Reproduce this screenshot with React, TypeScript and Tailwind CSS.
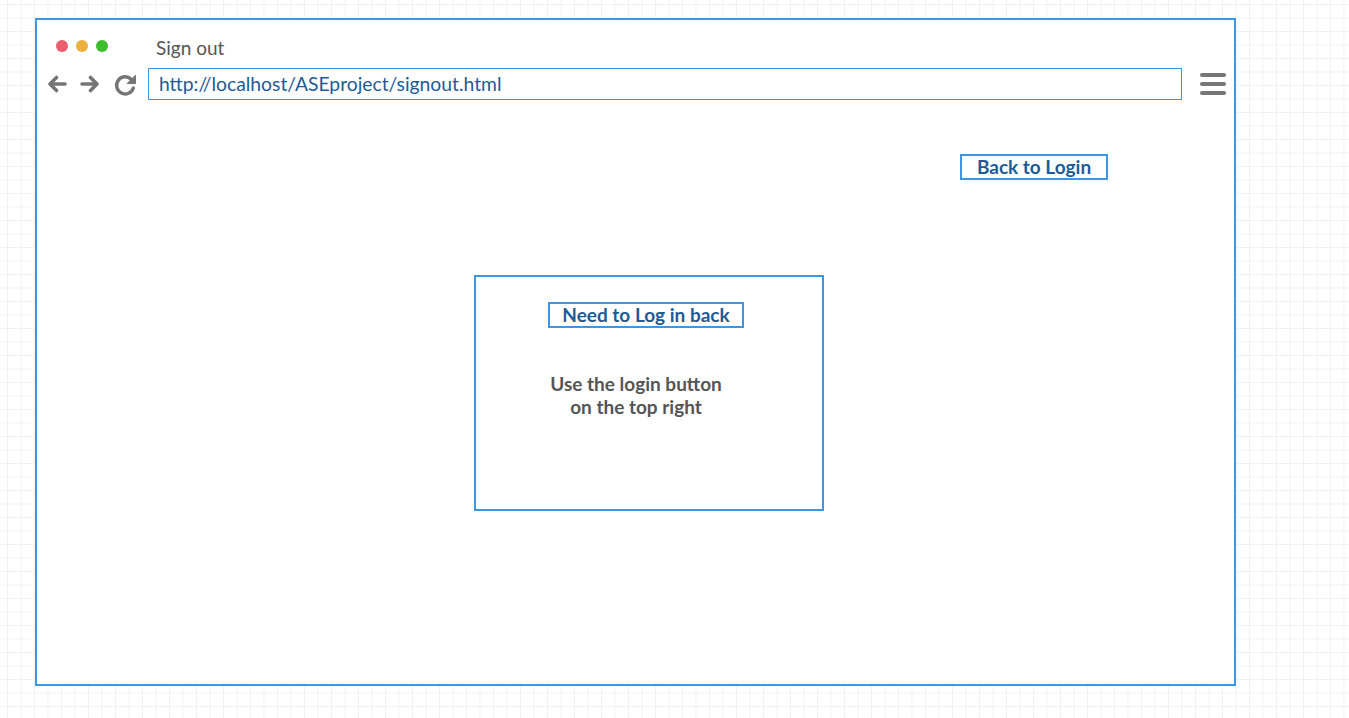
import React from 'react';

const ArrowLeft = () => (
  <svg width="20" height="18" viewBox="0 0 20 18" fill="none" stroke="#757575" strokeWidth="3.6" strokeLinecap="round" strokeLinejoin="round">
    <path d="M18 9H3M9.5 2.5L3 9l6.5 6.5" />
  </svg>
);

const ArrowRight = () => (
  <svg width="20" height="18" viewBox="0 0 20 18" fill="none" stroke="#757575" strokeWidth="3.6" strokeLinecap="round" strokeLinejoin="round">
    <path d="M2 9h15M10.5 2.5L17 9l-6.5 6.5" />
  </svg>
);

const Reload = () => (
  <svg width="24" height="24" viewBox="0 0 24 24" fill="none">
    <path d="M18.2 6.2A8.6 8.6 0 1 0 20.4 15" stroke="#757575" strokeWidth="3.4" strokeLinecap="round" />
    <path d="M22.5 2.2V10.6H14.1Z" fill="#757575" stroke="#757575" strokeWidth="1" strokeLinejoin="round" />
  </svg>
);

const App = () => {
  return (
    <div
      className="min-h-[718px] w-full pt-[18px] pl-[35px] bg-white bg-[linear-gradient(to_right,#f1f1f1_1px,transparent_1px),linear-gradient(to_bottom,#f1f1f1_1px,transparent_1px)] bg-[size:13.5px_13.5px] bg-[position:7px_4px]"
      style={{ fontFamily: 'Lato, "Open Sans", sans-serif' }}
    >
      <div className="w-[1201px] h-[668px] border-2 border-[#3c96e2] bg-white flex flex-col">
        {/* title row */}
        <div className="flex items-center h-[24px] mt-[14px]">
          <div className="flex items-center gap-[8px] ml-[19px]">
            <span className="w-[12px] h-[12px] rounded-full bg-[#eb5d6d]" />
            <span className="w-[12px] h-[12px] rounded-full bg-[#ebb03b]" />
            <span className="w-[12px] h-[12px] rounded-full bg-[#3dbd2d]" />
          </div>
          <span className="ml-[48px] text-[19px] text-[#555555] leading-none mt-[3px]">Sign out</span>
        </div>

        {/* address row */}
        <div className="flex items-center mt-[10px] h-[32px]">
          <div className="ml-[10px] flex items-center gap-[13px]">
            <ArrowLeft />
            <ArrowRight />
          </div>
          <div className="ml-[13px] mt-[2px]">
            <Reload />
          </div>
          <div className="ml-[11px] w-[1034px] h-[32px] border border-[#3c96e2] flex items-center pl-[10px] text-[19.3px] text-[#1d5b97]">
            http://localhost/ASEproject/signout.html
          </div>
          <div className="ml-[18px] flex flex-col gap-[4.5px]">
            <span className="block w-[26px] h-[4.5px] rounded-full bg-[#777777]" />
            <span className="block w-[26px] h-[4.5px] rounded-full bg-[#777777]" />
            <span className="block w-[26px] h-[4.5px] rounded-full bg-[#777777]" />
          </div>
        </div>

        {/* back to login */}
        <div className="flex mt-[54px] pl-[923px]">
          <button className="w-[148px] h-[26px] pb-[2px] border-2 border-[#3c96e2] flex items-center justify-center text-[19px] font-bold text-[#1d5b97] leading-none">
            Back to Login
          </button>
        </div>

        {/* message card */}
        <div className="ml-[437px] mt-[95px] w-[350px] h-[236px] border-2 border-[#3c96e2] flex flex-col items-start">
          <div className="ml-[72px] mt-[25px] w-[196px] h-[26px] pb-[2px] border-2 border-[#3c96e2] flex items-center justify-center text-[19px] font-bold text-[#1d5b97] leading-none">
            Need to Log in back
          </div>
          <p className="mt-[44px] w-[320px] text-center text-[19px] font-bold leading-[23px] text-[#555555]">
            Use the login button
            <br />
            on the top right
          </p>
        </div>
      </div>
    </div>
  );
};

export default App;
